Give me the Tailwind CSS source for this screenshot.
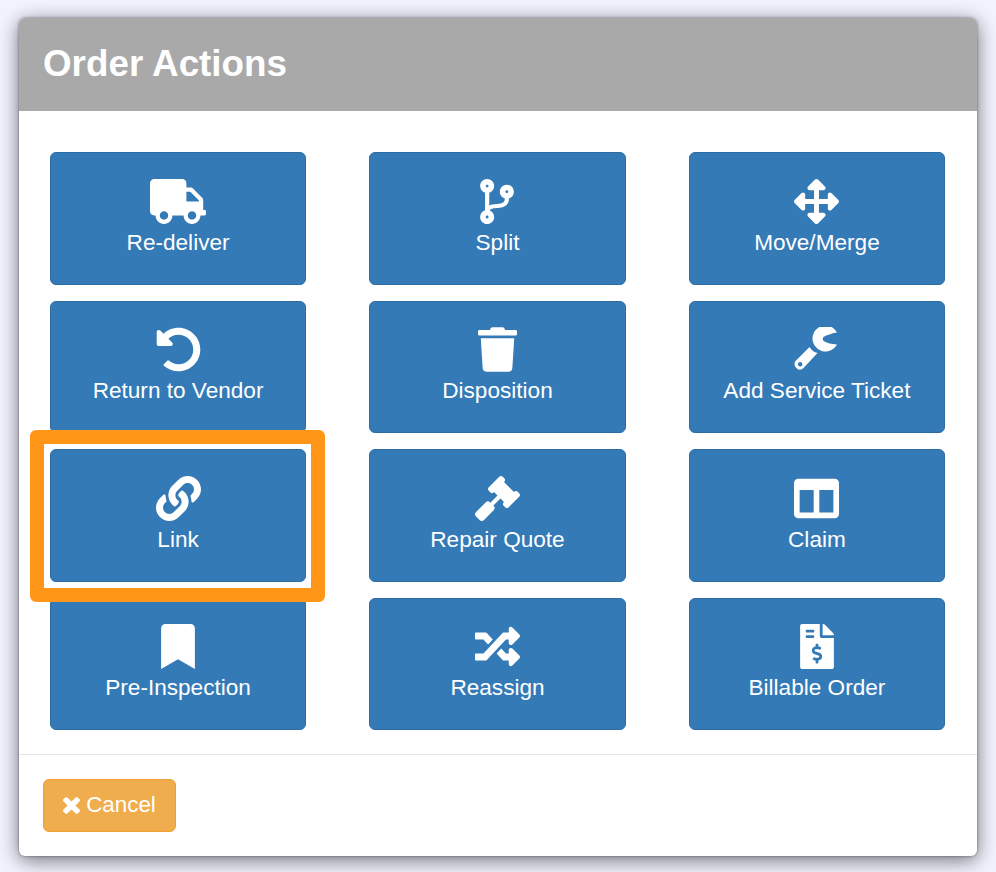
<!DOCTYPE html>
<html lang="en">
<head>
<meta charset="utf-8">
<title>Order Actions</title>
<script src="https://cdn.jsdelivr.net/npm/@tailwindcss/browser@4"></script>
</head>
<body class="bg-[#f2f3fe] font-['Liberation_Sans',Arial,sans-serif] h-[872px] overflow-hidden">
<div class="relative ml-[19px] mt-[18px] w-[958px] h-[838px] bg-white rounded-[6px] shadow-[0_4px_20px_rgba(0,0,0,0.55),0_0_3px_rgba(0,0,0,0.4)] flex flex-col">
  <header class="h-[93px] shrink-0 bg-[#a9a9a9] rounded-t-[6px] pl-[24px] flex items-center">
    <h1 class="text-[36.8px] leading-none font-bold text-white">Order Actions</h1>
  </header>

  <main class="h-[643px] shrink-0 pt-[41px] pl-[31px] pr-[32px] pb-[24px] grid grid-cols-3 grid-rows-4 gap-x-[63.3px] gap-y-[16px]">
    <button class="flex flex-col items-center pt-[26px] bg-[#337ab7] border border-[#2e6da4] rounded-[6px] text-white text-[22.6px] leading-[37px]">
      <svg class="h-[45px] w-[56px] fill-white shrink-0" viewBox="0 0 640 512"><path d="M624 352h-16V243.900c0-12.700-5.100-24.900-14.100-33.900L494 110.100c-9-9-21.200-14.100-33.900-14.100H416V48c0-26.500-21.500-48-48-48H48C21.500 0 0 21.500 0 48v320c0 26.500 21.500 48 48 48h16c0 53 43 96 96 96s96-43 96-96h128c0 53 43 96 96 96s96-43 96-96h48c8.800 0 16-7.200 16-16v-32c0-8.800-7.200-16-16-16zM160 464c-26.500 0-48-21.500-48-48s21.500-48 48-48 48 21.500 48 48-21.500 48-48 48zm320 0c-26.500 0-48-21.500-48-48s21.500-48 48-48 48 21.500 48 48-21.500 48-48 48zm80-208H416V144h44.100l99.900 99.900V256z"/></svg>
      <span>Re-deliver</span>
    </button>
    <button class="flex flex-col items-center pt-[26px] bg-[#337ab7] border border-[#2e6da4] rounded-[6px] text-white text-[22.6px] leading-[37px]">
      <svg class="h-[45px] w-[34px] fill-white shrink-0" viewBox="0 0 384 512"><path fill-rule="evenodd" d="M384 144c0-44.200-35.800-80-80-80s-80 35.800-80 80c0 36.400 24.300 67.100 57.500 76.800-.6 16.100-4.200 28.500-11 36.900-15.400 19.200-49.300 22.400-85.200 25.700-28.200 2.600-57.400 5.400-81.300 16.900v-144c32.500-10.200 56-40.500 56-76.300 0-44.200-35.800-80-80-80S0 35.800 0 80c0 35.800 23.500 66.100 56 76.300v199.300C23.500 365.900 0 396.200 0 432c0 44.200 35.800 80 80 80s80-35.800 80-80c0-34-21.200-63.100-51.200-74.600 3.100-5.200 7.800-9.800 14.900-13.400 16.200-8.200 40.400-10.400 66.100-12.800 42.200-3.900 90-8.400 118.200-43.400 14-17.400 21.100-39.800 21.600-67.900 31.600-10.800 54.400-40.700 54.400-75.900zM80 64c8.800 0 16 7.200 16 16s-7.200 16-16 16-16-7.200-16-16 7.200-16 16-16zm0 384c-8.800 0-16-7.200-16-16s7.200-16 16-16 16 7.200 16 16-7.200 16-16 16zm224-320c8.800 0 16 7.200 16 16s-7.200 16-16 16-16-7.200-16-16 7.200-16 16-16z"/></svg>
      <span>Split</span>
    </button>
    <button class="flex flex-col items-center pt-[26px] bg-[#337ab7] border border-[#2e6da4] rounded-[6px] text-white text-[22.6px] leading-[37px]">
      <svg class="h-[45px] w-[45px] fill-white shrink-0" viewBox="0 0 512 512"><path d="M352.201 425.775l-79.196 79.196c-9.373 9.373-24.568 9.373-33.941 0l-79.196-79.196c-15.119-15.119-4.411-40.971 16.971-40.970h51.162L228 284H127.196v51.162c0 21.382-25.851 32.090-40.971 16.971L7.029 272.937c-9.373-9.373-9.373-24.569 0-33.941L86.225 159.800c15.119-15.119 40.971-4.411 40.971 16.971V228H228V127.196h-51.230c-21.382 0-32.090-25.851-16.971-40.971l79.196-79.196c9.373-9.373 24.568-9.373 33.941 0l79.196 79.196c15.119 15.119 4.411 40.971-16.971 40.971h-51.162V228h100.804v-51.162c0-21.382 25.851-32.090 40.970-16.971l79.196 79.196c9.373 9.373 9.373 24.569 0 33.941L425.773 352.200c-15.119 15.119-40.971 4.411-40.970-16.971V284H284v100.804h51.230c21.382 0 32.090 25.851 16.971 40.971z"/></svg>
      <span>Move/Merge</span>
    </button>

    <button class="flex flex-col items-center pt-[25px] bg-[#337ab7] border border-[#2e6da4] rounded-[6px] text-white text-[22.6px] leading-[37px]">
      <svg class="h-[45px] w-[45px] fill-white shrink-0" viewBox="0 0 512 512"><path d="M255.545 8c-66.269.119-126.438 26.233-170.800 68.685L48.970 40.971C33.851 25.851 8 36.559 8 57.941V192c0 13.255 10.745 24 24 24h134.059c21.382 0 32.090-25.851 16.971-40.971l-41.750-41.750c30.864-28.899 70.801-44.900 113.230-45.266 92.398-.798 170.283 73.977 169.484 169.442C423.236 348.009 349.816 424 256 424c-41.127 0-79.997-14.678-110.630-41.556-4.743-4.161-11.906-3.908-16.368.553L89.340 422.659c-4.872 4.872-4.631 12.815.482 17.433C133.798 479.813 192.074 504 256 504c136.966 0 247.999-111.033 248-247.998C504.001 119.193 392.354 7.755 255.545 8z"/></svg>
      <span>Return to Vendor</span>
    </button>
    <button class="flex flex-col items-center pt-[25px] bg-[#337ab7] border border-[#2e6da4] rounded-[6px] text-white text-[22.6px] leading-[37px]">
      <svg class="h-[45px] w-[39px] fill-white shrink-0" viewBox="0 0 448 512"><path d="M432 32H312l-9.400-18.700A24 24 0 0 0 281.100 0H166.800a23.720 23.720 0 0 0-21.400 13.300L136 32H16A16 16 0 0 0 0 48v32a16 16 0 0 0 16 16h416a16 16 0 0 0 16-16V48a16 16 0 0 0-16-16zM53.200 467a48 48 0 0 0 47.900 45h245.800a48 48 0 0 0 47.900-45L416 128H32z"/></svg>
      <span>Disposition</span>
    </button>
    <button class="flex flex-col items-center pt-[25px] bg-[#337ab7] border border-[#2e6da4] rounded-[6px] text-white text-[22.6px] leading-[37px]">
      <svg class="h-[45px] w-[45px] fill-white shrink-0" viewBox="9.500 7 45 45"><path fill-rule="evenodd" d="M25 27L11 41Q9 44 11 47L13 49Q16 51 19 48L33 33Q28 32 25 27ZM15.700 44.300m-2.200 0a2.200 2.200 0 1 0 4.400 0a2.200 2.200 0 1 0-4.400 0Z"/><path d="M52.500 12.500A13 13 0 1 0 52.500 24.500Q44 24 39 21Q37.500 19 39 17Q44 14 52.500 12.500Z"/></svg>
      <span>Add Service Ticket</span>
    </button>

    <button class="flex flex-col items-center pt-[26px] bg-[#337ab7] border border-[#2e6da4] rounded-[6px] text-white text-[22.6px] leading-[37px]">
      <svg class="h-[45px] w-[45px] fill-white shrink-0" viewBox="0 0 512 512"><path d="M326.612 185.391c59.747 59.809 58.927 155.698.36 214.590-.11.120-.24.250-.36.370l-67.200 67.200c-59.270 59.270-155.699 59.262-214.960 0-59.270-59.260-59.270-155.700 0-214.960l37.106-37.106c9.840-9.840 26.786-3.300 27.294 10.606.648 17.722 3.826 35.527 9.690 52.721 1.986 5.822.567 12.262-3.783 16.612l-13.087 13.087c-28.026 28.026-28.905 73.660-1.155 101.960 28.024 28.579 74.086 28.749 102.325.510l67.200-67.190c28.191-28.191 28.073-73.757 0-101.830-3.701-3.694-7.429-6.564-10.341-8.569a16.037 16.037 0 0 1-6.947-12.606c-.396-10.567 3.348-21.456 11.698-29.806l21.054-21.055c5.521-5.521 14.182-6.199 20.584-1.731a152.482 152.482 0 0 1 20.522 17.197zM467.547 44.449c-59.261-59.262-155.690-59.270-214.960 0l-67.200 67.200c-.12.120-.25.250-.36.370-58.566 58.892-59.387 154.781.36 214.590a152.454 152.454 0 0 0 20.521 17.196c6.402 4.468 15.064 3.789 20.584-1.731l21.054-21.055c8.350-8.350 12.094-19.239 11.698-29.806a16.037 16.037 0 0 0-6.947-12.606c-2.912-2.005-6.640-4.875-10.341-8.569-28.073-28.073-28.191-73.639 0-101.830l67.200-67.190c28.239-28.239 74.300-28.069 102.325.510 27.750 28.300 26.872 73.934-1.155 101.960l-13.087 13.087c-4.350 4.350-5.769 10.790-3.783 16.612 5.864 17.194 9.042 34.999 9.690 52.721.509 13.906 17.454 20.446 27.294 10.606l37.106-37.106c59.271-59.259 59.271-155.699.001-214.959z"/></svg>
      <span>Link</span>
    </button>
    <button class="flex flex-col items-center pt-[26px] bg-[#337ab7] border border-[#2e6da4] rounded-[6px] text-white text-[22.6px] leading-[37px]">
      <svg class="h-[45px] w-[45px] fill-white shrink-0" viewBox="0 0 512 512"><path d="M504.971 199.362l-22.627-22.627c-9.373-9.373-24.569-9.373-33.941 0l-5.657 5.657L329.608 69.255l5.657-5.657c9.373-9.373 9.373-24.569 0-33.941L312.638 7.029c-9.373-9.373-24.569-9.373-33.941 0L154.246 131.480c-9.373 9.373-9.373 24.569 0 33.941l22.627 22.627c9.373 9.373 24.569 9.373 33.941 0l5.657-5.657 39.598 39.598-81.040 81.040-5.657-5.657c-12.497-12.497-32.758-12.497-45.255 0L9.373 412.118c-12.497 12.497-12.497 32.758 0 45.255l45.255 45.255c12.497 12.497 32.758 12.497 45.255 0l114.745-114.745c12.497-12.497 12.497-32.758 0-45.255l-5.657-5.657 81.040-81.040 39.598 39.598-5.657 5.657c-9.373 9.373-9.373 24.569 0 33.941l22.627 22.627c9.373 9.373 24.569 9.373 33.941 0l124.451-124.451c9.372-9.372 9.372-24.568 0-33.941z"/></svg>
      <span>Repair Quote</span>
    </button>
    <button class="flex flex-col items-center pt-[26px] bg-[#337ab7] border border-[#2e6da4] rounded-[6px] text-white text-[22.6px] leading-[37px]">
      <svg class="h-[45px] w-[45px] fill-white shrink-0" viewBox="0 0 512 512"><path d="M464 32H48C21.490 32 0 53.490 0 80v352c0 26.510 21.490 48 48 48h416c26.510 0 48-21.490 48-48V80c0-26.510-21.490-48-48-48zM224 416H64V160h160v256zm224 0H288V160h160v256z"/></svg>
      <span>Claim</span>
    </button>

    <button class="flex flex-col items-center pt-[25px] bg-[#337ab7] border border-[#2e6da4] rounded-[6px] text-white text-[22.6px] leading-[37px]">
      <svg class="h-[45px] w-[34px] fill-white shrink-0" viewBox="0 0 384 512"><path d="M0 512V48C0 21.490 21.490 0 48 0h288c26.510 0 48 21.490 48 48v464L192 400 0 512z"/></svg>
      <span>Pre-Inspection</span>
    </button>
    <button class="flex flex-col items-center pt-[25px] bg-[#337ab7] border border-[#2e6da4] rounded-[6px] text-white text-[22.6px] leading-[37px]">
      <svg class="h-[45px] w-[45px] fill-white shrink-0" viewBox="0 0 512 512"><path d="M504.971 359.029c9.373 9.373 9.373 24.569 0 33.941l-80 79.984c-15.010 15.010-40.971 4.490-40.971-16.971V416h-58.785a12.004 12.004 0 0 1-8.773-3.812l-70.556-75.596 53.333-57.143L352 336h32v-39.981c0-21.438 25.943-31.998 40.971-16.971l80 79.981zM12 176h84l52.781 56.551 53.333-57.143-70.556-75.596A11.999 11.999 0 0 0 122.785 96H12c-6.627 0-12 5.373-12 12v56c0 6.627 5.373 12 12 12zm372 0v39.984c0 21.460 25.961 31.980 40.971 16.971l80-79.984c9.373-9.373 9.373-24.569 0-33.941l-80-79.981C409.943 24.021 384 34.582 384 56.019V96h-58.785a12.004 12.004 0 0 0-8.773 3.812L96 336H12c-6.627 0-12 5.373-12 12v56c0 6.627 5.373 12 12 12h110.785c3.326 0 6.503-1.381 8.773-3.812L352 176h32z"/></svg>
      <span>Reassign</span>
    </button>
    <button class="flex flex-col items-center pt-[25px] bg-[#337ab7] border border-[#2e6da4] rounded-[6px] text-white text-[22.6px] leading-[37px]">
      <svg class="h-[45px] w-[34px] fill-white shrink-0" viewBox="0 0 384 512"><path d="M377 105L279.100 7c-4.500-4.500-10.600-7-17-7H256v128h128v-6.100c0-6.300-2.500-12.400-7-16.900zm-153 31V0H24C10.700 0 0 10.700 0 24v464c0 13.300 10.700 24 24 24h336c13.300 0 24-10.700 24-24V160H248c-13.200 0-24-10.800-24-24zM64 72c0-4.420 3.580-8 8-8h80c4.420 0 8 3.580 8 8v16c0 4.420-3.580 8-8 8H72c-4.420 0-8-3.580-8-8V72zm0 80v-16c0-4.420 3.580-8 8-8h80c4.420 0 8 3.580 8 8v16c0 4.420-3.580 8-8 8H72c-4.420 0-8-3.580-8-8zm144 263.880V440c0 4.420-3.580 8-8 8h-16c-4.420 0-8-3.580-8-8v-24.290c-11.290-.58-22.270-4.520-31.370-11.350-3.900-2.930-4.100-8.770-.57-12.140l11.750-11.210c2.770-2.640 6.890-2.760 10.130-.73 3.870 2.420 8.260 3.720 12.820 3.720h28.110c6.500 0 11.800-5.920 11.800-13.190 0-5.950-3.610-11.190-8.770-12.730l-45-13.500c-18.590-5.580-31.580-23.420-31.580-43.390 0-24.520 19.050-44.440 42.670-45.070V232c0-4.420 3.580-8 8-8h16c4.420 0 8 3.580 8 8v24.290c11.290.58 22.270 4.510 31.370 11.350 3.900 2.930 4.100 8.770.57 12.140l-11.750 11.210c-2.770 2.640-6.890 2.760-10.130.73-3.870-2.430-8.260-3.720-12.820-3.720h-28.110c-6.500 0-11.800 5.920-11.800 13.190 0 5.950 3.610 11.190 8.770 12.730l45 13.500c18.590 5.580 31.580 23.420 31.580 43.390 0 24.530-19.050 44.440-42.670 45.070z"/></svg>
      <span>Billable Order</span>
    </button>
  </main>

  <footer class="flex-1 border-t border-[#e5e5e5] pt-[24px] pl-[24px]">
    <button class="flex items-center justify-center gap-[6px] w-[133px] h-[53px] bg-[#f0ad4e] border border-[#eea236] rounded-[6px] text-white text-[22.4px] pb-[1px]">
      <svg class="w-[17px] h-[17px] fill-white" viewBox="110 366 1188 1188"><path d="M1298 1322q0 40-28 68l-136 136q-28 28-68 28t-68-28l-294-294-294 294q-28 28-68 28t-68-28l-136-136q-28-28-28-68t28-68l294-294-294-294q-28-28-28-68t28-68l136-136q28-28 68-28t68 28l294 294 294-294q28-28 68-28t68 28l136 136q28 28 28 68t-28 68l-294 294 294 294q28 28 28 68z"/></svg>
      <span>Cancel</span>
    </button>
  </footer>

  <div class="absolute left-[11px] top-[412px] w-[295px] h-[172px] border-[14px] border-[#ff9618] rounded-[6px]"></div>
</div>
</body>
</html>
